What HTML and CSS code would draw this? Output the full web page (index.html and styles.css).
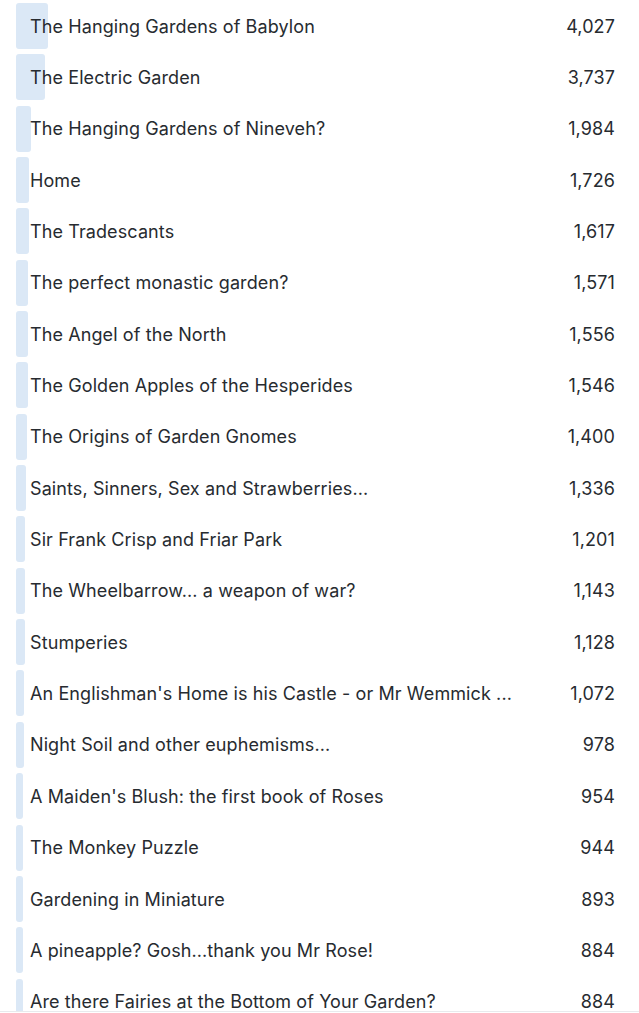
FILE: index.html
```html
<!DOCTYPE html>
<html>
<head>
<meta charset="utf-8">
<link rel="stylesheet" href="styles.css">
</head>
<body>
<div class="list">
  <div class="row"><div class="bar" style="width:31.5px"></div><div class="label">The Hanging Gardens of Babylon</div><div class="num">4,027</div></div>
  <div class="row"><div class="bar" style="width:29px"></div><div class="label">The Electric Garden</div><div class="num">3,737</div></div>
  <div class="row"><div class="bar" style="width:15.4px"></div><div class="label">The Hanging Gardens of Nineveh?</div><div class="num">1,984</div></div>
  <div class="row"><div class="bar" style="width:13.4px"></div><div class="label">Home</div><div class="num">1,726</div></div>
  <div class="row"><div class="bar" style="width:12.6px"></div><div class="label">The Tradescants</div><div class="num">1,617</div></div>
  <div class="row"><div class="bar" style="width:12.2px"></div><div class="label">The perfect monastic garden?</div><div class="num">1,571</div></div>
  <div class="row"><div class="bar" style="width:12.1px"></div><div class="label">The Angel of the North</div><div class="num">1,556</div></div>
  <div class="row"><div class="bar" style="width:12px"></div><div class="label">The Golden Apples of the Hesperides</div><div class="num">1,546</div></div>
  <div class="row"><div class="bar" style="width:10.9px"></div><div class="label">The Origins of Garden Gnomes</div><div class="num">1,400</div></div>
  <div class="row"><div class="bar" style="width:10.4px"></div><div class="label">Saints, Sinners, Sex and Strawberries...</div><div class="num">1,336</div></div>
  <div class="row"><div class="bar" style="width:9.3px"></div><div class="label">Sir Frank Crisp and Friar Park</div><div class="num">1,201</div></div>
  <div class="row"><div class="bar" style="width:8.9px"></div><div class="label">The Wheelbarrow... a weapon of war?</div><div class="num">1,143</div></div>
  <div class="row"><div class="bar" style="width:8.8px"></div><div class="label">Stumperies</div><div class="num">1,128</div></div>
  <div class="row"><div class="bar" style="width:8.3px"></div><div class="label">An Englishman's Home is his Castle - or Mr Wemmick ...</div><div class="num">1,072</div></div>
  <div class="row"><div class="bar" style="width:7.6px"></div><div class="label">Night Soil and other euphemisms...</div><div class="num">978</div></div>
  <div class="row"><div class="bar" style="width:7.4px"></div><div class="label">A Maiden's Blush: the first book of Roses</div><div class="num">954</div></div>
  <div class="row"><div class="bar" style="width:7.3px"></div><div class="label">The Monkey Puzzle</div><div class="num">944</div></div>
  <div class="row"><div class="bar" style="width:6.9px"></div><div class="label">Gardening in Miniature</div><div class="num">893</div></div>
  <div class="row"><div class="bar" style="width:6.9px"></div><div class="label">A pineapple? Gosh...thank you Mr Rose!</div><div class="num">884</div></div>
  <div class="row"><div class="bar" style="width:6.9px"></div><div class="label">Are there Fairies at the Bottom of Your Garden?</div><div class="num">884</div></div>
</div>
</body>
</html>
```

FILE: styles.css
```css
html, body {
  margin: 0;
  padding: 0;
  background: #ffffff;
  overflow: hidden;
}
body {
  font-family: Inter, "Noto Sans", "Liberation Sans", sans-serif;
  color: #272b30;
  height: 1013px;
}
.list {
  padding: 0 24px 0 16px;
  border-bottom: 1px solid #e8eaed;
  height: 1011px;
  overflow: hidden;
}
.row {
  display: grid;
  grid-template-columns: 1fr auto;
  height: 51.35px;
}
.bar {
  grid-area: 1 / 1;
  align-self: start;
  margin-top: 3px;
  height: 46px;
  min-width: 6px;
  background: #dbe8f6;
  border-radius: 3px;
}
.label {
  grid-area: 1 / 1;
  align-self: center;
  padding-left: 14px;
  padding-top: 2px;
  font-size: 18px;
  letter-spacing: 0.1px;
  line-height: 22px;
  white-space: nowrap;
  position: relative;
}
.num {
  grid-area: 1 / 2;
  align-self: center;
  padding-top: 2px;
  font-size: 18px;
  letter-spacing: 0.1px;
  line-height: 22px;
  text-align: right;
}
```
